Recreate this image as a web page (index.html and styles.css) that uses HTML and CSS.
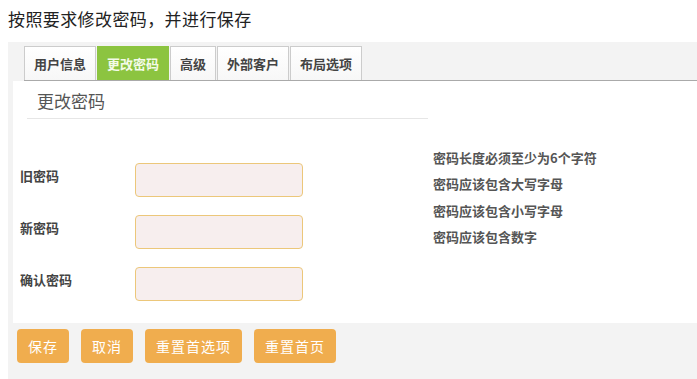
FILE: index.html
```html
<!DOCTYPE html>
<html lang="zh-CN">
<head>
  <meta charset="UTF-8">
  <title>更改密码</title>
  <link rel="stylesheet" href="styles.css">
</head>
<body>
  <p class="intro">按照要求修改密码，并进行保存</p>

  <div class="panel">
    <ul class="tabs">
      <li class="tab">用户信息</li>
      <li class="tab active">更改密码</li>
      <li class="tab">高级</li>
      <li class="tab">外部客户</li>
      <li class="tab">布局选项</li>
    </ul>

    <div class="content">
      <h2 class="section-title">更改密码</h2>

      <div class="form-area">
        <form class="fields">
          <div class="row">
            <label for="oldPwd">旧密码</label>
            <input type="password" id="oldPwd">
          </div>
          <div class="row">
            <label for="newPwd">新密码</label>
            <input type="password" id="newPwd">
          </div>
          <div class="row">
            <label for="confirmPwd">确认密码</label>
            <input type="password" id="confirmPwd">
          </div>
        </form>

        <ul class="rules">
          <li>密码长度必须至少为6个字符</li>
          <li>密码应该包含大写字母</li>
          <li>密码应该包含小写字母</li>
          <li>密码应该包含数字</li>
        </ul>
      </div>
    </div>

    <div class="actions">
      <button class="btn">保存</button>
      <button class="btn">取消</button>
      <button class="btn">重置首选项</button>
      <button class="btn">重置首页</button>
    </div>
  </div>
</body>
</html>
```

FILE: styles.css
```css
:root {
  --panel: #f3f3f3;
  --text: #444;
  --muted: #555;
  --green: #8cc440;
  --orange: #f0ad4e;
  --input-bg: #f7eeee;
  --input-border: #ecc77a;
}

* {
  margin: 0;
  padding: 0;
  box-sizing: border-box;
}

body {
  font-family: "Noto Sans CJK SC", "Noto Sans", sans-serif;
  background: white;
  color: var(--text);
  overflow: hidden;
}

.intro {
  font-size: 17px;
  letter-spacing: 0.4px;
  line-height: 22px;
  color: #222;
  padding: 8px 8px 12px;
}

.panel {
  margin-left: 8px;
  background: var(--panel);
  padding: 4px 0 0 5px;
  height: 337px;
}

.tabs {
  list-style: none;
  display: flex;
  gap: 1px;
  margin-left: 11px;
  border-bottom: 1px solid #aaa;
}

.tab {
  height: 34px;
  padding: 0 9px;
  border: 1px solid #ccc;
  border-bottom: none;
  background: linear-gradient(#fff, #f7f7f7);
  font-size: 13px;
  font-weight: bold;
  line-height: 33px;
  color: var(--text);
}

.tab.active {
  background: var(--green);
  border-color: var(--green);
  color: #f4fbe9;
}

.content {
  background: white;
  padding: 7px 0 22px 7px;
}

.section-title {
  width: 401px;
  margin-left: 7px;
  padding: 0 0 4px 10px;
  border-bottom: 1px solid #e6e6e6;
  font-size: 17px;
  font-weight: normal;
  line-height: 26px;
  color: var(--muted);
}

.form-area {
  display: flex;
}

.fields {
  display: flex;
  flex-direction: column;
  gap: 18px;
  padding-top: 44px;
  width: 413px;
}

.row {
  display: flex;
  align-items: center;
}

.row label {
  width: 115px;
  font-size: 13px;
  font-weight: bold;
  padding-bottom: 9px;
}

.row input {
  width: 168px;
  height: 34px;
  background: var(--input-bg);
  border: 1px solid var(--input-border);
  border-radius: 4px;
  outline: none;
}

.rules {
  list-style: none;
  padding-top: 26px;
  font-size: 13px;
  font-weight: bold;
  line-height: 26.3px;
  color: var(--muted);
}

.actions {
  display: flex;
  gap: 12px;
  padding: 6px 0 0 4px;
}

.btn {
  height: 34px;
  padding: 0 11px;
  background: var(--orange);
  border: none;
  border-radius: 4px;
  color: white;
  font-family: inherit;
  font-size: 14px;
  letter-spacing: 1px;
}
```
